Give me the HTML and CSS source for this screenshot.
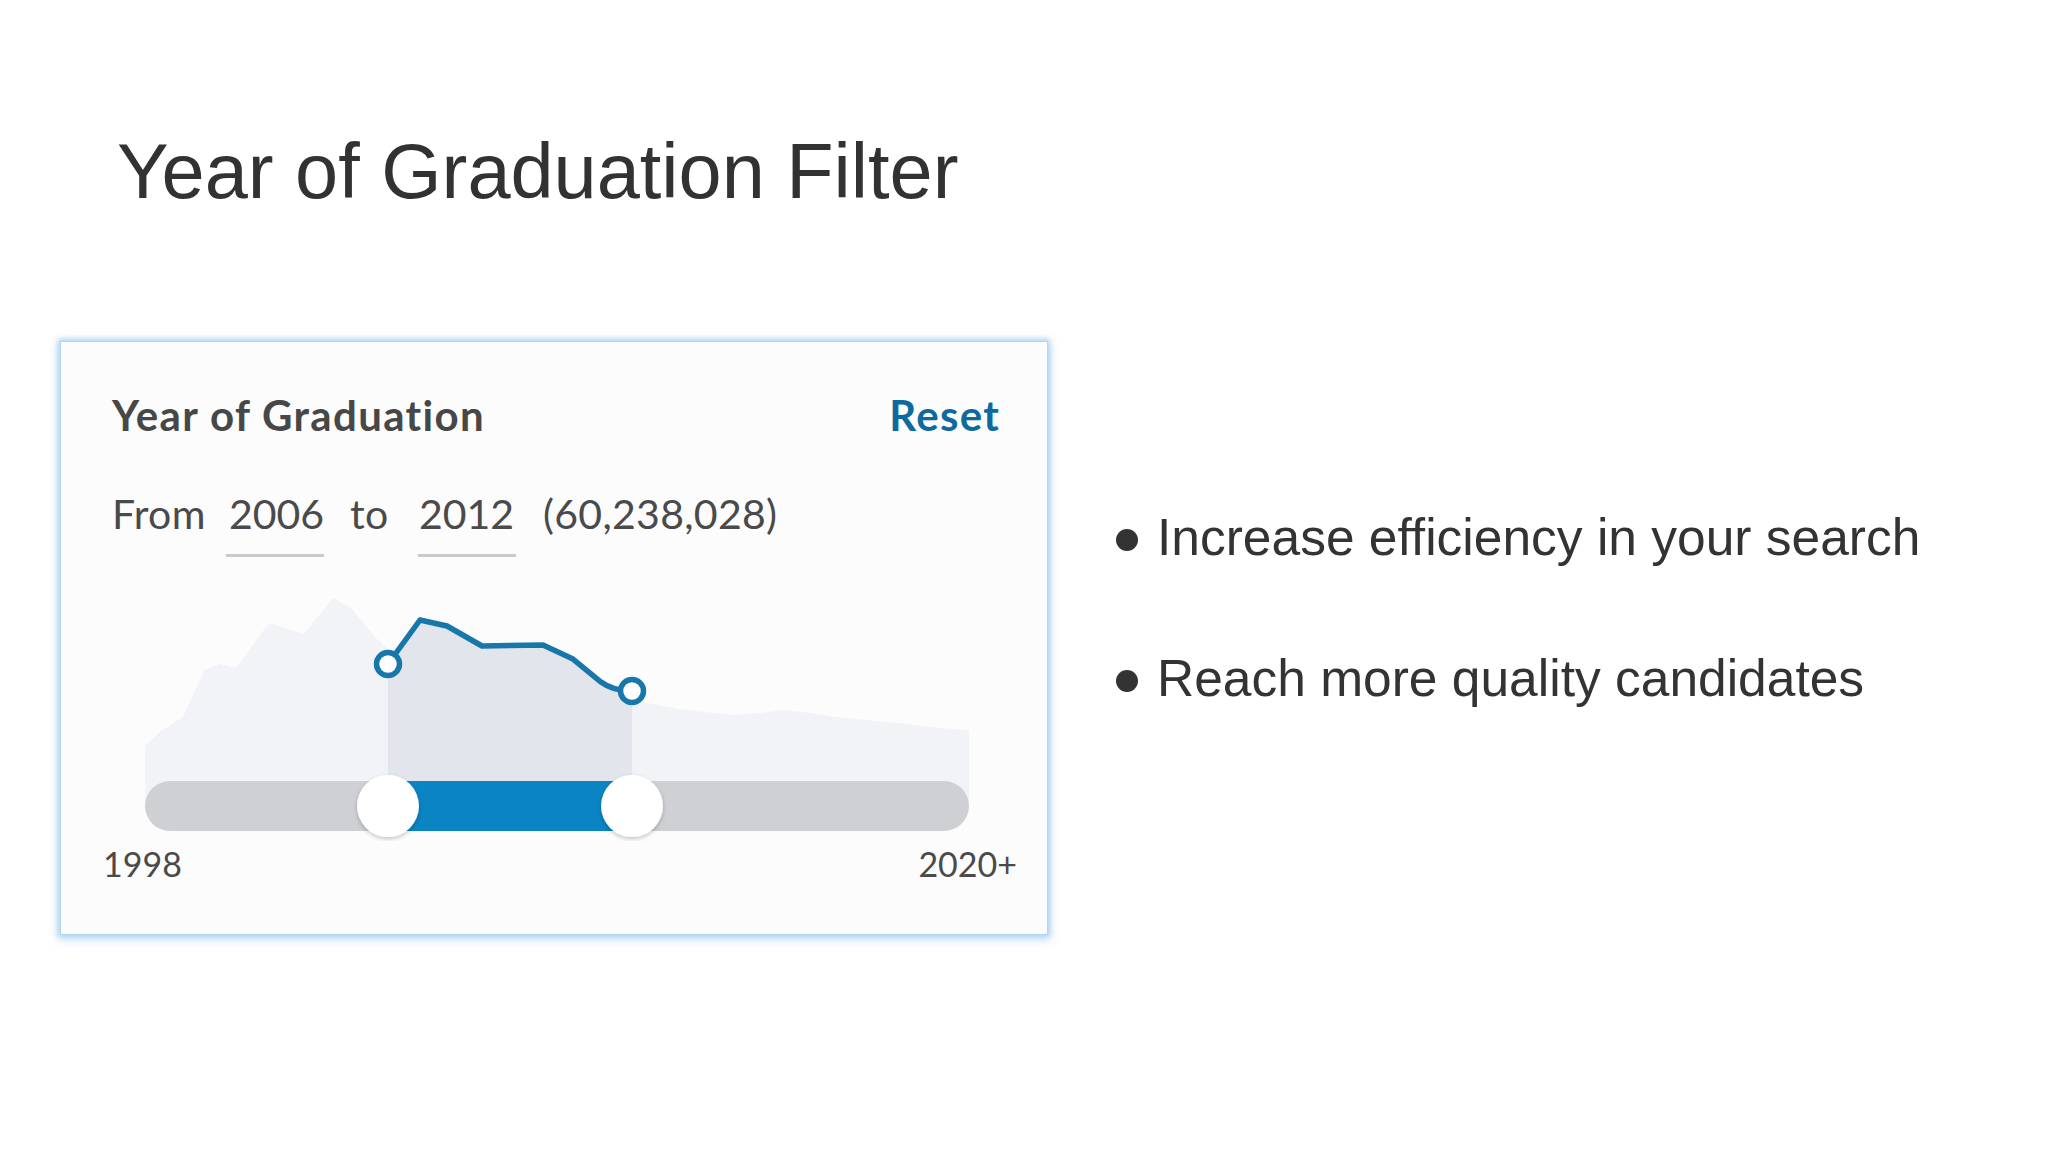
FILE: index.html
```html
<!DOCTYPE html>
<html lang="en">
<head>
<meta charset="utf-8">
<title>Year of Graduation Filter</title>
<link rel="stylesheet" href="styles.css">
</head>
<body>
  <h1 class="title">Year of Graduation Filter</h1>
  <main class="content">
    <section class="card">
      <div class="card-head">
        <span class="card-title">Year of Graduation</span>
        <span class="reset">Reset</span>
      </div>
      <div class="range-row">
        <span class="lbl-from">From</span>
        <span class="field field-a">2006</span>
        <span class="lbl-to">to</span>
        <span class="field field-b">2012</span>
        <span class="count">(60,238,028)</span>
      </div>
      <svg class="chart" width="986" height="250" viewBox="0 0 986 250" xmlns="http://www.w3.org/2000/svg">
        <defs>
          <filter id="thumbShadow" x="-30%" y="-30%" width="160%" height="170%">
            <feDropShadow dx="0" dy="2" stdDeviation="2" flood-color="#000" flood-opacity="0.22"/>
          </filter>
        </defs>
        <polygon class="area-off" points="84,215 84,155 100,140 122,126 143,80 158,73 175,77 208,32 243,43 272,7 290,17 315,47 327,57 327,215"/>
        <polygon class="area-off" points="571,109 618,118 670,124 699,122 723,119 749,122 775,126 827,131 879,137 908,139 908,215 571,215"/>
        <polygon class="area-on" points="327,73 359,29 386,35 421,55 482,54 512,68 542,93 560,100 571,100 571,215 327,215"/>
        <path class="trend" d="M327,73 L359,29 L386,35 L421,55 L482,54 L512,68 L540,91 Q552,100 571,100"/>
        <circle class="dot" cx="327" cy="73" r="11.5"/>
        <circle class="dot" cx="571" cy="100" r="11.5"/>
        <rect class="track" x="84" y="190" width="824" height="50" rx="25"/>
        <rect class="track-on" x="327" y="190" width="244" height="50"/>
        <circle class="thumb" cx="327" cy="215" r="31" filter="url(#thumbShadow)"/>
        <circle class="thumb" cx="571" cy="215" r="31" filter="url(#thumbShadow)"/>
      </svg>
      <div class="scale-row">
        <span>1998</span>
        <span>2020+</span>
      </div>
    </section>
    <ul class="points">
      <li><span class="dot-mark"></span><span>Increase efficiency in your search</span></li>
      <li><span class="dot-mark"></span><span>Reach more quality candidates</span></li>
    </ul>
  </main>
</body>
</html>
```
FILE: styles.css
```css
html, body {
  margin: 0;
  padding: 0;
  background: #ffffff;
}

body {
  width: 2048px;
  height: 1152px;
  overflow: hidden;
  font-family: "Liberation Sans", Arial, sans-serif;
  color: #333333;
}

.title {
  margin: 132px 0 0 117px;
  font-size: 77.5px;
  line-height: 78px;
  font-weight: 400;
  color: #323232;
}

.content {
  display: flex;
  align-items: flex-start;
  margin-top: 132px;
}

.card {
  margin-left: 61px;
  width: 986px;
  height: 592px;
  box-sizing: border-box;
  background: #fcfcfd;
  box-shadow: 0 0 0 1px #b3d5f1, 0 0 5px 3px rgba(160, 205, 242, 0.75), 0 3px 10px 3px rgba(150, 198, 238, 0.45);
  display: flex;
  flex-direction: column;
  font-family: Lato, "Noto Sans", sans-serif;
}

.card-head {
  display: flex;
  justify-content: space-between;
  padding: 48px 48px 0 51px;
  font-size: 42px;
  line-height: 50px;
  font-weight: 700;
  letter-spacing: 1.35px;
}

.card-title {
  color: #474747;
}

.reset {
  color: #0d6a9f;
  margin-right: -1.35px;
}

.range-row {
  display: flex;
  align-items: flex-start;
  margin-top: 49px;
  padding-left: 51px;
  font-size: 41px;
  line-height: 50px;
  letter-spacing: 0.3px;
  color: #4a4a4a;
}

.lbl-from {
  width: 114px;
}

.field {
  width: 98px;
  box-sizing: border-box;
  padding-bottom: 15px;
  border-bottom: 3px solid #cacaca;
  letter-spacing: 0;
}

.field-a {
  padding-left: 3px;
}

.field-b {
  padding-left: 1px;
}

.lbl-to {
  width: 94px;
  box-sizing: border-box;
  padding-left: 26px;
}

.count {
  padding-left: 27px;
}

.chart {
  display: block;
  margin-top: 34px;
}

.area-off {
  fill: #f2f3f6;
}

.area-on {
  fill: #e2e5eb;
}

.trend {
  fill: none;
  stroke: #1777aa;
  stroke-width: 5.5;
  stroke-linejoin: round;
  stroke-linecap: round;
}

.dot {
  fill: #ffffff;
  stroke: #1777aa;
  stroke-width: 5.5;
}

.track {
  fill: #cfd0d4;
}

.track-on {
  fill: #0a84c3;
}

.thumb {
  fill: #ffffff;
}

.scale-row {
  display: flex;
  justify-content: space-between;
  margin-top: 3px;
  padding: 0 30px 0 42px;
  font-size: 34px;
  line-height: 40px;
  color: #4a4a4a;
}

.points {
  list-style: none;
  margin: 170px 0 0 69px;
  padding: 0;
  display: flex;
  flex-direction: column;
  gap: 90px;
  font-size: 51.5px;
  line-height: 51px;
  color: #333333;
}

.points li {
  display: flex;
  align-items: flex-start;
  gap: 19px;
}

.dot-mark {
  flex: none;
  width: 22px;
  height: 22px;
  margin-top: 17px;
  border-radius: 50%;
  background: #333333;
}
```
